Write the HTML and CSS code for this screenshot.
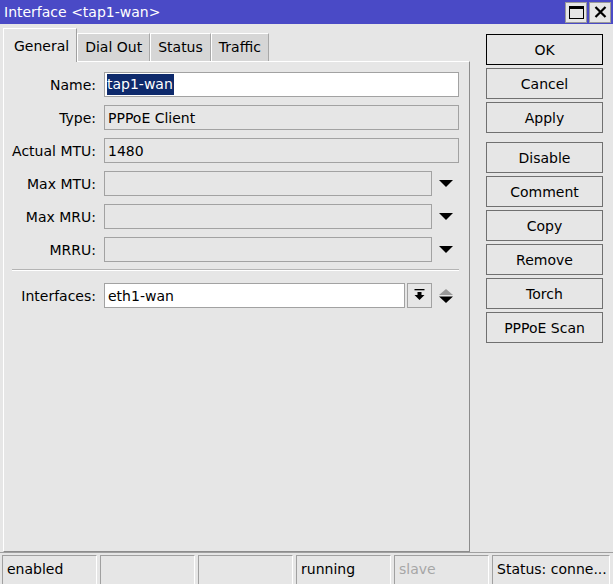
FILE: index.html
```html
<!DOCTYPE html>
<html>
<head>
<meta charset="utf-8">
<link rel="stylesheet" href="styles.css">
</head>
<body>
<div class="window">
  <div class="titlebar">
    <span class="title">Interface &lt;tap1-wan&gt;</span>
    <div class="wbtns">
      <div class="wbtn">
        <svg width="15" height="13" viewBox="0 0 15 13"><rect x="0.5" y="0.5" width="14" height="12" fill="none" stroke="#000" stroke-width="1"/><rect x="0" y="0" width="15" height="3" fill="#000"/></svg>
      </div>
      <div class="wbtn">
        <svg width="13" height="12" viewBox="0 0 13 12"><path d="M1.5 1 L11.5 11 M11.5 1 L1.5 11" stroke="#000" stroke-width="2.2" fill="none"/></svg>
      </div>
    </div>
  </div>
  <div class="main">
    <div class="left">
      <div class="tabs">
        <div class="tab active">General</div>
        <div class="tab">Dial Out</div>
        <div class="tab">Status</div>
        <div class="tab">Traffic</div>
      </div>
      <div class="panel">
        <div class="row">
          <label class="lbl">Name:</label>
          <div class="field edit"><span class="sel">tap1-wan</span></div>
        </div>
        <div class="row">
          <label class="lbl">Type:</label>
          <div class="field ro">PPPoE Client</div>
        </div>
        <div class="row">
          <label class="lbl">Actual MTU:</label>
          <div class="field ro">1480</div>
        </div>
        <div class="row">
          <label class="lbl">Max MTU:</label>
          <div class="field ro short"></div>
          <div class="drop"><svg width="14" height="8" viewBox="0 0 14 8"><polygon points="0,0 14,0 7,7" fill="#000"/></svg></div>
        </div>
        <div class="row">
          <label class="lbl">Max MRU:</label>
          <div class="field ro short"></div>
          <div class="drop"><svg width="14" height="8" viewBox="0 0 14 8"><polygon points="0,0 14,0 7,7" fill="#000"/></svg></div>
        </div>
        <div class="row">
          <label class="lbl">MRRU:</label>
          <div class="field ro short"></div>
          <div class="drop"><svg width="14" height="8" viewBox="0 0 14 8"><polygon points="0,0 14,0 7,7" fill="#000"/></svg></div>
        </div>
        <div class="sep"></div>
        <div class="row">
          <label class="lbl">Interfaces:</label>
          <div class="field edit iface">eth1-wan</div>
          <div class="ibtn"><svg width="13" height="13" viewBox="0 0 13 13"><rect x="1.5" y="0" width="10" height="1.3" fill="#000"/><rect x="4.5" y="3" width="4" height="3" fill="#000"/><polygon points="1.5,6 11.5,6 6.5,11" fill="#000"/></svg></div>
          <div class="updown"><svg width="16" height="16" viewBox="0 0 16 16"><polygon points="1,7 15,7 8,1" fill="#9a9a9a"/><polygon points="1,8.5 15,8.5 8,15" fill="#000"/></svg></div>
        </div>
      </div>
    </div>
    <div class="side">
      <div class="btn ok">OK</div>
      <div class="btn">Cancel</div>
      <div class="btn">Apply</div>
      <div class="btn gapped">Disable</div>
      <div class="btn">Comment</div>
      <div class="btn">Copy</div>
      <div class="btn">Remove</div>
      <div class="btn">Torch</div>
      <div class="btn">PPPoE Scan</div>
    </div>
  </div>
  <div class="statusbar">
    <div class="cell">enabled</div>
    <div class="cell"></div>
    <div class="cell"></div>
    <div class="cell">running</div>
    <div class="cell dim">slave</div>
    <div class="cell last">Status: conne...</div>
  </div>
</div>
</body>
</html>
```
FILE: styles.css
```css
* { box-sizing: border-box; }
html, body { margin: 0; padding: 0; }
body {
  width: 613px;
  height: 584px;
  overflow: hidden;
  background: #e6e6e6;
  font-family: "DejaVu Sans", sans-serif;
  font-size: 14px;
  color: #000;
}
.window { width: 613px; height: 584px; display: flex; flex-direction: column; }
.titlebar {
  height: 24px;
  background: #4a4ac6;
  color: #fff;
  display: flex;
  align-items: center;
  justify-content: space-between;
  padding: 0 2px 0 4px;
  flex: none;
}
.title { font-size: 14px; line-height: 24px; }
.wbtns { display: flex; gap: 2px; }
.wbtn {
  width: 22px; height: 21px;
  background: #e6e6e6;
  border: 1px solid #9a9a9a;
  display: flex; align-items: center; justify-content: center;
}
.main { height: 528px; display: flex; flex: none; }
.left { width: 470px; padding: 4px 0 0 3px; display: flex; flex-direction: column; }
.tabs { display: flex; align-items: flex-end; height: 33px; position: relative; z-index: 1; flex: none; }
.tab {
  height: 28px;
  padding: 0 7px 1px 7px;
  background: #d6d6d6;
  border-top: 1px solid #fff;
  border-left: 1px solid #fff;
  border-right: 1px solid #a8a8a8;
  display: flex; align-items: center;
  line-height: 1;
}
.tab.active {
  height: 34px;
  margin-bottom: -1px;
  padding: 1px 7px 0 10px;
  background: #e6e6e6;
  border-right: 1px solid #a0a0a0;
}
.panel {
  flex: 1;
  border: 1px solid;
  border-color: #fff #8c8c8c #8c8c8c #fff;
  padding: 10px 0 0 0;
}
.row { display: flex; align-items: center; height: 25px; margin-bottom: 8px; }
.lbl { width: 93px; text-align: right; flex: none; padding-right: 1px; }
.field {
  margin-left: 7px;
  height: 25px;
  width: 355px;
  border: 1px solid #a2a2a2;
  display: flex; align-items: center;
  padding-left: 3px;
  white-space: nowrap;
}
.field.edit { background: #fff; padding-left: 2px; }
.field.ro { background: #e6e6e6; }
.field.short { width: 328px; }
.field.iface { width: 301px; padding-left: 3px; }
.sel { background: #0e2a6c; color: #fff; line-height: 21px; padding: 0 1px 0 0; }
.drop { width: 27px; height: 25px; display: flex; align-items: center; justify-content: center; padding-top: 1px; }
.sep {
  margin: -1px 10px 12px 8px;
  border-top: 1px solid #b4b4b4;
  border-bottom: 1px solid #fff;
  height: 2px;
}
.ibtn {
  margin-left: 2px;
  width: 25px; height: 25px;
  border: 1px solid #a2a2a2;
  background: #e6e6e6;
  display: flex; align-items: center; justify-content: center;
}
.updown { width: 27px; height: 25px; display: flex; align-items: center; justify-content: center; }
.side { padding: 10px 0 0 16px; display: flex; flex-direction: column; gap: 3px; }
.btn {
  width: 117px; height: 31px;
  border: 1px solid #707070;
  background: #e6e6e6;
  display: flex; align-items: center; justify-content: center;
  line-height: 1;
}
.btn.ok { border-color: #000; }
.btn.gapped { margin-top: 6px; }
.statusbar {
  flex: 1;
  border-top: 1px solid #a0a0a0;
  padding: 2px 0 0 2px;
  display: flex; gap: 3px;
}
.cell {
  width: 95px; height: 30px;
  border-top: 1px solid #a0a0a0;
  border-left: 1px solid #a0a0a0;
  border-right: 1px solid #fff;
  padding: 0 0 4px 4px;
  display: flex; align-items: center;
  white-space: nowrap;
}
.cell.dim { color: #a6a6a6; }
.cell.last { width: 118px; }
```
